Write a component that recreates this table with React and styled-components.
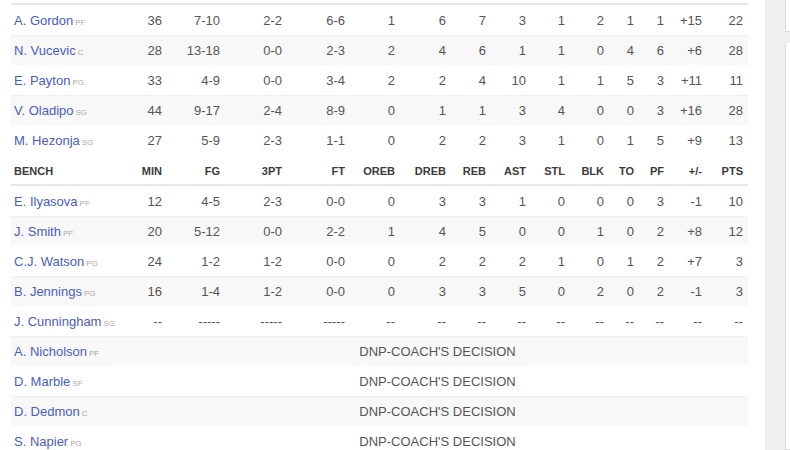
import React from "react";
import styled, { createGlobalStyle } from "styled-components";

const GlobalStyle = createGlobalStyle`
  html, body {
    margin: 0;
    padding: 0;
    background: #ffffff;
    font-family: "Liberation Sans", Arial, sans-serif;
    overflow: hidden;
  }
`;

const COLUMNS = "116px 40px 58px 62px 63px 50px 51px 40px 40px 39px 39px 30px 30px 38px 41px";

const starters = [
  { name: "A. Gordon", pos: "PF", stats: ["36", "7-10", "2-2", "6-6", "1", "6", "7", "3", "1", "2", "1", "1", "+15", "22"] },
  { name: "N. Vucevic", pos: "C", stats: ["28", "13-18", "0-0", "2-3", "2", "4", "6", "1", "1", "0", "4", "6", "+6", "28"] },
  { name: "E. Payton", pos: "PG", stats: ["33", "4-9", "0-0", "3-4", "2", "2", "4", "10", "1", "1", "5", "3", "+11", "11"] },
  { name: "V. Oladipo", pos: "SG", stats: ["44", "9-17", "2-4", "8-9", "0", "1", "1", "3", "4", "0", "0", "3", "+16", "28"] },
  { name: "M. Hezonja", pos: "SG", stats: ["27", "5-9", "2-3", "1-1", "0", "2", "2", "3", "1", "0", "1", "5", "+9", "13"] },
];

const headers = ["MIN", "FG", "3PT", "FT", "OREB", "DREB", "REB", "AST", "STL", "BLK", "TO", "PF", "+/-", "PTS"];

const bench = [
  { name: "E. Ilyasova", pos: "PF", stats: ["12", "4-5", "2-3", "0-0", "0", "3", "3", "1", "0", "0", "0", "3", "-1", "10"] },
  { name: "J. Smith", pos: "PF", stats: ["20", "5-12", "0-0", "2-2", "1", "4", "5", "0", "0", "1", "0", "2", "+8", "12"] },
  { name: "C.J. Watson", pos: "PG", stats: ["24", "1-2", "1-2", "0-0", "0", "2", "2", "2", "1", "0", "1", "2", "+7", "3"] },
  { name: "B. Jennings", pos: "PG", stats: ["16", "1-4", "1-2", "0-0", "0", "3", "3", "5", "0", "2", "0", "2", "-1", "3"] },
  { name: "J. Cunningham", pos: "SG", stats: ["--", "-----", "-----", "-----", "--", "--", "--", "--", "--", "--", "--", "--", "--", "--"] },
  { name: "A. Nicholson", pos: "PF", dnp: true },
  { name: "D. Marble", pos: "SF", dnp: true },
  { name: "D. Dedmon", pos: "C", dnp: true },
  { name: "S. Napier", pos: "PG", dnp: true },
];

const PlayerRow = ({ player, striped }) => (
  <Row striped={striped}>
    <NameCell>
      <PlayerName>{player.name}</PlayerName>
      <Position>{player.pos}</Position>
    </NameCell>
    {player.dnp ? (
      <DnpCell>DNP-COACH'S DECISION</DnpCell>
    ) : (
      player.stats.map((s, i) => <StatCell key={i}>{s}</StatCell>)
    )}
  </Row>
);

const App = () => (
  <>
    <GlobalStyle />
    <Page>
      <Main>
        <Table>
          <Body>
            {starters.map((p, i) => (
              <PlayerRow key={p.name} player={p} striped={i % 2 === 1} />
            ))}
          </Body>
          <HeaderRow>
            <HeaderName>BENCH</HeaderName>
            {headers.map(h => (
              <HeaderCell key={h}>{h}</HeaderCell>
            ))}
          </HeaderRow>
          <Body>
            {bench.map((p, i) => (
              <PlayerRow key={p.name} player={p} striped={i % 2 === 1} />
            ))}
          </Body>
        </Table>
      </Main>
      <Sidebar>
        <SideCard height="32px" />
        <SideCard height="420px" />
      </Sidebar>
    </Page>
  </>
);

const Page = styled.div`
  display: flex;
  width: 790px;
  height: 450px;
  overflow: hidden;
`;

const Main = styled.div`
  width: 737px;
  padding: 3px 17px 0 11px;
  flex: none;
`;

const Table = styled.div`
  border-top: 2px solid #e6e6e6;
  display: flex;
  flex-direction: column;
`;

const Body = styled.div`
  display: flex;
  flex-direction: column;
`;

const Row = styled.div`
  display: grid;
  grid-template-columns: ${COLUMNS};
  align-items: center;
  height: 30px;
  box-sizing: border-box;
  border-top: 1px solid ${props => (props.striped ? "#f0f0f0" : "transparent")};
  background-color: ${props => (props.striped ? "#f8f8f8" : "#ffffff")};
  font-size: 13px;
`;

const HeaderRow = styled.div`
  display: grid;
  grid-template-columns: ${COLUMNS};
  align-items: center;
  height: 31px;
  padding-top: 2px;
  box-sizing: border-box;
  border-bottom: 2px solid #e6e6e6;
  font-size: 11px;
  font-weight: bold;
  color: #3a3a3a;
`;

const HeaderName = styled.div`
  padding-left: 3px;
`;

const HeaderCell = styled.div`
  text-align: right;
  padding-right: 5px;
`;

const NameCell = styled.div`
  padding-left: 3px;
  white-space: nowrap;
  display: flex;
  align-items: baseline;
`;

const PlayerName = styled.span`
  color: #4a5cc8;
  font-size: 13px;
`;

const Position = styled.span`
  color: #aaaaaa;
  font-size: 8px;
  margin-left: 2px;
`;

const StatCell = styled.div`
  text-align: right;
  padding-right: 5px;
  color: #555555;
`;

const DnpCell = styled.div`
  grid-column: 2 / -1;
  text-align: center;
  color: #555555;
`;

const Sidebar = styled.div`
  flex: 1;
  background: #efefef;
  padding-left: 20px;
  display: flex;
  flex-direction: column;
  gap: 11px;
`;

const SideCard = styled.div`
  height: ${props => props.height};
  background: #ffffff;
  border: 1px solid #dddddd;
  border-top: none;
  border-right: none;
`;

export default App;
